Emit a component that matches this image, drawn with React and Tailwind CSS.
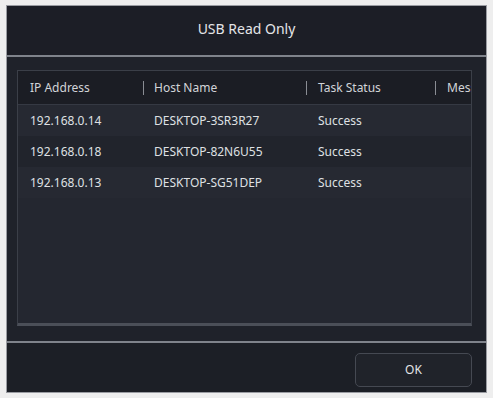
const rows = [
  { ip: '192.168.0.14', host: 'DESKTOP-3SR3R27', status: 'Success' },
  { ip: '192.168.0.18', host: 'DESKTOP-82N6U55', status: 'Success' },
  { ip: '192.168.0.13', host: 'DESKTOP-SG51DEP', status: 'Success' },
];

export default function App() {
  return (
    <div
      className="flex h-[398px] w-[493px] flex-col bg-[#eeeeee] px-[6px] py-[5px]"
      style={{ fontFamily: '"Segoe UI", "Noto Sans", "Open Sans", sans-serif' }}
    >
      <div className="flex flex-1 flex-col border border-[#9a9ca2] bg-[#1f222a]">
        <div className="flex h-[49px] items-center justify-center bg-[#1c1e26] pb-[4px] text-[14px] text-[#e4e5e8]">
          USB Read Only
        </div>
        <div className="h-[2px] bg-[#7f838b]" />
        <div className="flex flex-1 flex-col pl-[10px] pr-[14px] pb-[15px] pt-[13px]">
          <div className="flex flex-1 flex-col overflow-hidden border border-[#3b3f48] border-b-[3px] border-b-[#4b4f58] bg-[#242730]">
            <div className="flex h-[34px] shrink-0 items-center overflow-hidden whitespace-nowrap border-b border-[#353943] bg-[#1b1d24] text-[12px] text-[#d2d4d8]">
              <span className="w-[125px] shrink-0 pl-[12px]">IP Address</span>
              <span className="h-[14px] w-px shrink-0 bg-[#8a8d94]" />
              <span className="w-[162px] shrink-0 pl-[10px]">Host Name</span>
              <span className="h-[14px] w-px shrink-0 bg-[#8a8d94]" />
              <span className="w-[128px] shrink-0 pl-[11px]">Task Status</span>
              <span className="h-[14px] w-px shrink-0 bg-[#8a8d94]" />
              <span className="shrink-0 pl-[11px]">Message</span>
            </div>
            {rows.map((r, i) => (
              <div
                key={r.ip}
                className={`flex h-[31px] shrink-0 items-center whitespace-nowrap text-[12px] text-[#dfe0e3] ${
                  i % 2 === 1 ? 'bg-[#21242c]' : 'bg-[#262932]'
                }`}
              >
                <span className="w-[126px] shrink-0 pl-[12px]">{r.ip}</span>
                <span className="w-[163px] shrink-0 pl-[10px]">{r.host}</span>
                <span className="shrink-0 pl-[11px]">{r.status}</span>
              </div>
            ))}
          </div>
        </div>
        <div className="h-[2px] bg-[#7f838b]" />
        <div className="flex h-[49px] items-center justify-end bg-[#1c1f26] pr-[14px]">
          <button className="mt-[4px] h-[34px] w-[117px] rounded-[5px] border border-[#454952] bg-[#20232a] text-[12px] text-[#e4e5e8]">
            OK
          </button>
        </div>
      </div>
    </div>
  );
}
